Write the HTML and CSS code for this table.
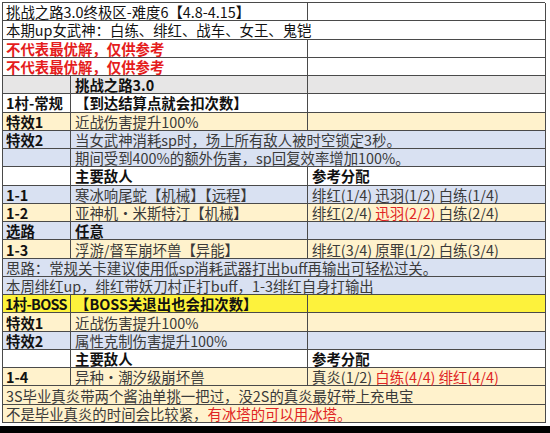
FILE: index.html
```html
<!DOCTYPE html>
<html lang="zh-CN">
<head>
<meta charset="utf-8">
<link rel="stylesheet" href="styles.css">
</head>
<body>
<div class="page">
  <div class="sheet">
    <div class="row"><div class="c w2 t">挑战之路3.0终极区-难度6【4.8-4.15】</div><div class="c"></div></div>
    <div class="row"><div class="c w3 t">本期up女武神：白练、绯红、战车、女王、鬼铠</div></div>
    <div class="row"><div class="c w2 r t">不代表最优解，仅供参考</div><div class="c"></div></div>
    <div class="row"><div class="c w2 r t">不代表最优解，仅供参考</div><div class="c"></div></div>
    <div class="row g"><div class="c"></div><div class="c b">挑战之路3.0</div><div class="c"></div></div>
    <div class="row"><div class="c b">1村-常规</div><div class="c b">【到达结算点就会扣次数】</div><div class="c"></div></div>
    <div class="row y"><div class="c b">特效1</div><div class="c">近战伤害提升100%</div><div class="c"></div></div>
    <div class="row bl"><div class="c b">特效2</div><div class="c w2">当女武神消耗sp时，场上所有敌人被时空锁定3秒。</div></div>
    <div class="row bl"><div class="c"></div><div class="c w2">期间受到400%的额外伤害，sp回复效率增加100%。</div></div>
    <div class="row"><div class="c"></div><div class="c b">主要敌人</div><div class="c b">参考分配</div></div>
    <div class="row bl"><div class="c b">1-1</div><div class="c">寒冰响尾蛇【机械】【远程】</div><div class="c">绯红(1/4) 迅羽(1/2) 白练(1/4)</div></div>
    <div class="row y"><div class="c b">1-2</div><div class="c">亚神机·米斯特汀【机械】</div><div class="c">绯红(2/4)&nbsp;<span class="r">迅羽(2/2)</span>&nbsp;白练(2/4)</div></div>
    <div class="row bl"><div class="c b">选路</div><div class="c b">任意</div><div class="c"></div></div>
    <div class="row y"><div class="c b">1-3</div><div class="c">浮游/督军崩坏兽【异能】</div><div class="c">绯红(3/4) 原罪(1/2) 白练(3/4)</div></div>
    <div class="row bl"><div class="c w3">思路：常规关卡建议使用低sp消耗武器打出buff再输出可轻松过关。</div></div>
    <div class="row bl"><div class="c w3">本周绯红up，绯红带妖刀村正打buff，1-3绯红自身打输出</div></div>
    <div class="row hy"><div class="c b n">1村-BOSS</div><div class="c b">【BOSS关退出也会扣次数】</div><div class="c"></div></div>
    <div class="row y"><div class="c b">特效1</div><div class="c">近战伤害提升100%</div><div class="c"></div></div>
    <div class="row bl"><div class="c b">特效2</div><div class="c">属性克制伤害提升100%</div><div class="c"></div></div>
    <div class="row"><div class="c"></div><div class="c b">主要敌人</div><div class="c b">参考分配</div></div>
    <div class="row y"><div class="c b">1-4</div><div class="c">异种·潮汐级崩坏兽</div><div class="c">真炎(1/2)&nbsp;<span class="r">白练(4/4) 绯红(4/4)</span></div></div>
    <div class="row y"><div class="c w3">3S毕业真炎带两个酱油单挑一把过，没2S的真炎最好带上充电宝</div></div>
    <div class="row y"><div class="c w3">不是毕业真炎的时间会比较紧，<span class="r">有冰塔的可以用冰塔。</span></div></div>
  </div>
  <div class="bottom"></div>
</div>
</body>
</html>
```

FILE: styles.css
```css
html, body {
  margin: 0;
  padding: 0;
  background: #ffffff;
}
.page {
  width: 550px;
  height: 433px;
  display: flex;
  flex-direction: column;
  overflow: hidden;
}
.sheet {
  margin: 2px 0 0 2px;
  width: 543px;
  height: 421px;
  box-sizing: border-box;
  display: grid;
  grid-template-columns: 68px 237px 238px;
  grid-template-rows: repeat(23, 1fr);
  border-top: 1px solid #4a4a4a;
  border-left: 1px solid #4a4a4a;
  font-family: "Noto Sans CJK SC", "Noto Sans", sans-serif;
  font-size: 14.4px;
  color: #3a3a3a;
}
.row {
  display: contents;
}
.c {
  box-sizing: border-box;
  border-right: 1px solid #4a4a4a;
  border-bottom: 1px solid #4a4a4a;
  display: flex;
  align-items: center;
  padding: 1px 0 0 4px;
  white-space: nowrap;
  overflow: visible;
  line-height: 16px;
  background: #ffffff;
}
.row .c:first-child {
  padding-left: 3px;
}
.w2 { grid-column: span 2; }
.w3 { grid-column: span 3; }
.b { font-weight: 700; color: #111111; }
.row .c.n { letter-spacing: -0.7px; padding-left: 2px; }
.t { color: #111111; }
.r { color: #e02424; }
.c.r { color: #e51d1d; font-weight: 700; }
.row.g .c { background: #e7e6e6; }
.row.y .c { background: #fff2cc; }
.row.bl .c { background: #d9e1f2; }
.row.hy .c { background: #fdf23c; }
.bottom {
  margin-top: 3px;
  flex: 1;
  background: #000000;
}
```
